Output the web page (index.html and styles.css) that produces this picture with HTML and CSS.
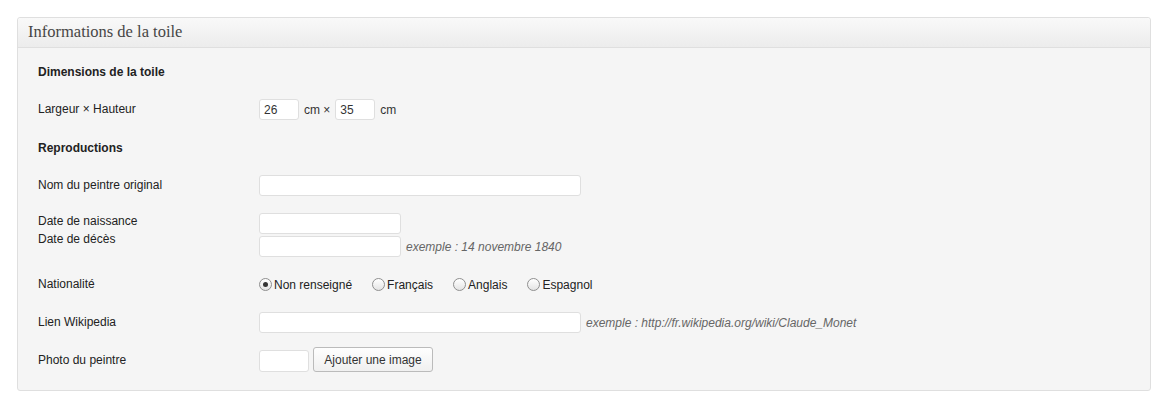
FILE: index.html
```html
<!DOCTYPE html>
<html lang="fr">
<head>
    <meta charset="UTF-8">
    <title>Informations de la toile</title>
    <link rel="stylesheet" href="styles.css">
</head>
<body>
    <div class="postbox">
        <h3 class="hndle">Informations de la toile</h3>
        <div class="inside">
            <div class="row heading">Dimensions de la toile</div>
            <div class="row">
                <div class="label">Largeur &times; Hauteur</div>
                <div class="field">
                    <input type="text" class="small" value="26">
                    <span class="unit">cm &times;</span>
                    <input type="text" class="small" value="35">
                    <span class="unit">cm</span>
                </div>
            </div>
            <div class="row heading">Reproductions</div>
            <div class="row">
                <div class="label">Nom du peintre original</div>
                <div class="field"><input type="text" class="wide"></div>
            </div>
            <div class="row top">
                <div class="label stacked">Date de naissance<br>Date de décès</div>
                <div class="field column">
                    <input type="text" class="medium">
                    <div class="line">
                        <input type="text" class="medium">
                        <span class="hint">exemple : 14 novembre 1840</span>
                    </div>
                </div>
            </div>
            <div class="row">
                <div class="label">Nationalité</div>
                <div class="field radios">
                    <label><input type="radio" name="nat" checked>Non renseigné</label>
                    <label><input type="radio" name="nat">Français</label>
                    <label><input type="radio" name="nat">Anglais</label>
                    <label><input type="radio" name="nat">Espagnol</label>
                </div>
            </div>
            <div class="row">
                <div class="label">Lien Wikipedia</div>
                <div class="field">
                    <input type="text" class="wide">
                    <span class="hint">exemple : http://fr.wikipedia.org/wiki/Claude_Monet</span>
                </div>
            </div>
            <div class="row">
                <div class="label">Photo du peintre</div>
                <div class="field">
                    <input type="text" class="tiny">
                    <button class="button">Ajouter une image</button>
                </div>
            </div>
        </div>
    </div>
</body>
</html>
```

FILE: styles.css
```css
body {
    margin: 17px 19px 0 17px;
    background-color: #ffffff;
    font-family: "Liberation Sans", Arial, sans-serif;
    font-size: 12px;
    color: #333333;
}

.postbox {
    border: 1px solid #dfdfdf;
    border-radius: 3px;
    background-color: #f5f5f5;
    box-shadow: inset 0 1px 0 #ffffff;
}

.hndle {
    margin: 0;
    height: 29px;
    line-height: 28px;
    padding: 0 10px;
    font-family: "Liberation Serif", Georgia, serif;
    font-size: 16.5px;
    font-weight: normal;
    color: #464646;
    background: linear-gradient(to bottom, #f9f9f9, #ececec);
    border-bottom: 1px solid #dfdfdf;
    border-radius: 3px 3px 0 0;
}

.inside {
    padding: 4px 20px 11px 20px;
}

.row {
    display: flex;
    align-items: center;
    padding: 9px 0 8px 0;
    min-height: 21px;
}

.row.top {
    align-items: flex-start;
}

.heading {
    font-weight: bold;
    color: #222222;
}

.label {
    width: 221px;
    flex-shrink: 0;
    color: #222222;
    line-height: 21px;
}

.label.stacked {
    line-height: 18px;
    margin-top: -1px;
}

.field {
    display: flex;
    align-items: center;
}

.field.column {
    flex-direction: column;
    align-items: flex-start;
    gap: 2px;
}

.line {
    display: flex;
    align-items: center;
}

input[type="text"] {
    box-sizing: border-box;
    height: 21px;
    margin: 0;
    padding: 2px 4px;
    border: 1px solid #dfdfdf;
    border-radius: 3px;
    background-color: #ffffff;
    font-family: "Liberation Sans", Arial, sans-serif;
    font-size: 12px;
    color: #333333;
}

input.small { width: 40px; }
input.wide { width: 322px; }
input.medium { width: 142px; }
input.tiny { width: 50px; height: 22px; margin-bottom: -1px; }

.unit {
    margin: 0 5px;
}

.hint {
    margin-left: 5px;
    font-style: italic;
    color: #666666;
}

.radios {
    gap: 20px;
}

.radios label {
    display: flex;
    align-items: center;
    color: #222222;
}

input[type="radio"] {
    appearance: none;
    -webkit-appearance: none;
    box-sizing: border-box;
    width: 13px;
    height: 13px;
    margin: 0 2px 0 0;
    border: 1px solid #8f8f8f;
    border-radius: 50%;
    background: linear-gradient(to bottom, #ffffff, #e4e4e4);
    display: flex;
    align-items: center;
    justify-content: center;
}

input[type="radio"]:checked::after {
    content: "";
    width: 5px;
    height: 5px;
    border-radius: 50%;
    background-color: #333333;
}

.button {
    width: 120px;
    height: 25px;
    margin: -3px 0 -1px 4px;
    padding: 0 10px;
    border: 1px solid #bbbbbb;
    border-radius: 3px;
    background: linear-gradient(to bottom, #fefefe, #f0f0f0);
    font-family: "Liberation Sans", Arial, sans-serif;
    font-size: 12px;
    color: #333333;
}
```
